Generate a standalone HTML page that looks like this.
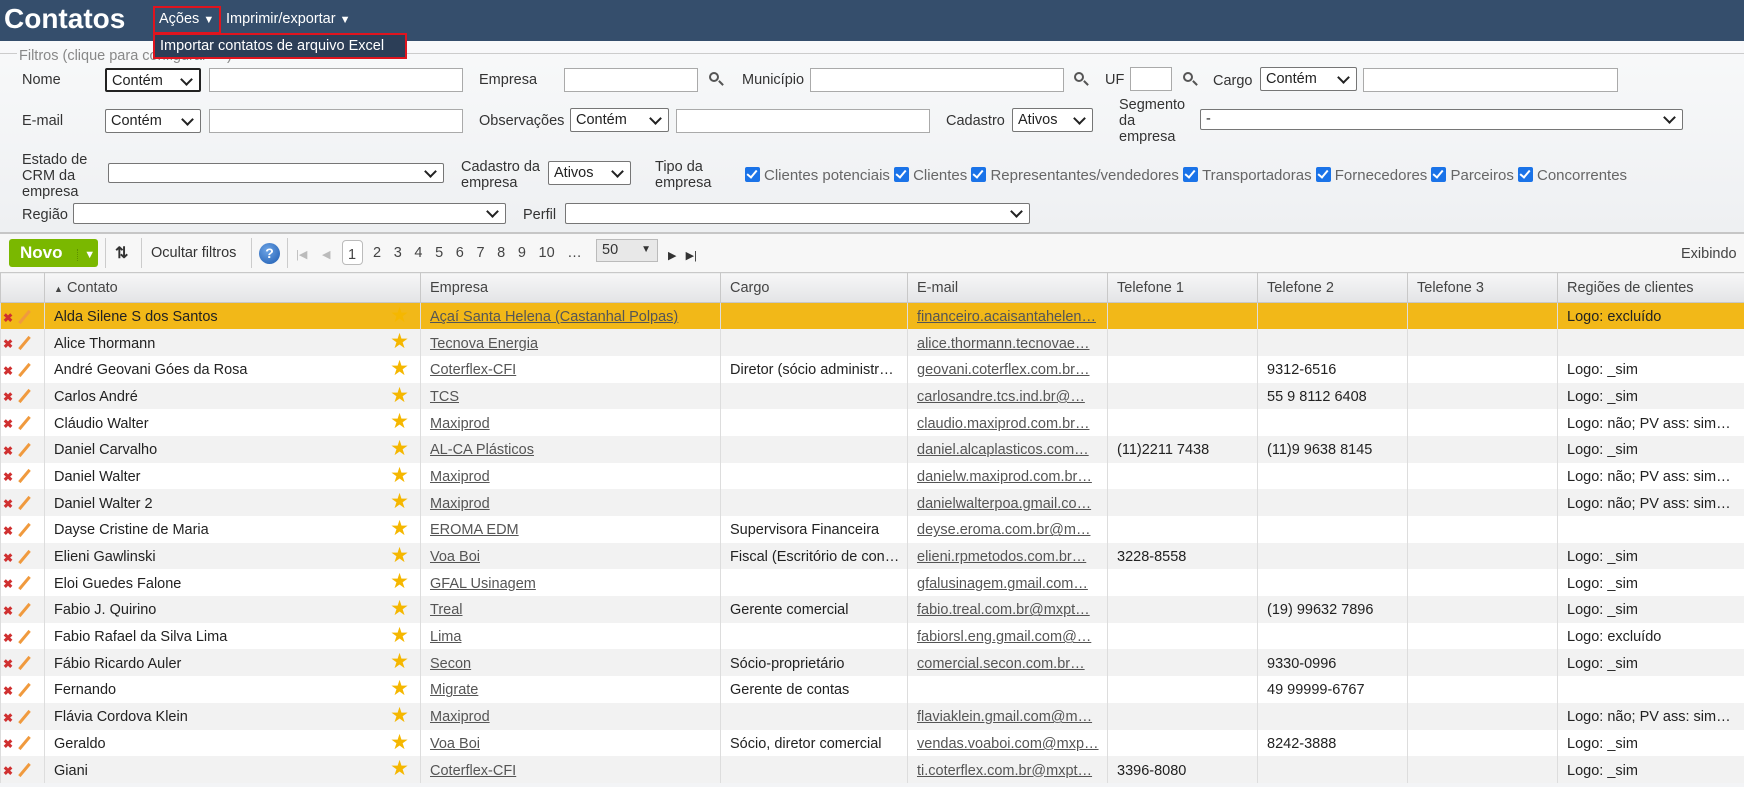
<!DOCTYPE html><html><head><meta charset="utf-8"><style>
*{box-sizing:border-box;margin:0;padding:0}
body{width:1744px;height:787px;overflow:hidden;background:#f3f4f6;font-family:"Liberation Sans",Arial,sans-serif;font-size:14.5px;color:#333;position:relative}
.a{position:absolute;white-space:nowrap}
.hdr{left:0;top:0;width:1744px;height:41px;background:#354e6c}
.inp{position:absolute;background:#fff;border:1px solid #aaa;height:24px}
.sel{position:absolute;background:#fff;border:1px solid #767676;border-radius:2px;height:24px;padding:3px 5px;font-size:14.5px;color:#222;white-space:nowrap}
.sel::after{content:"";position:absolute;right:8px;top:5px;width:7px;height:7px;border-right:2px solid #222;border-bottom:2px solid #222;transform:rotate(45deg)}
.sel.sm::after{top:3px}
.lb{position:absolute;color:#333;font-size:14.5px;line-height:17px;white-space:nowrap}
.cb{display:inline-block;width:15px;height:15px;background:#1a73e8;border-radius:2px;vertical-align:-2px;margin-right:4px;position:relative}
.cb::after{content:"";position:absolute;left:4px;top:1px;width:4px;height:8px;border-right:2px solid #fff;border-bottom:2px solid #fff;transform:rotate(40deg)}
table{position:absolute;left:0;top:272px;border-collapse:collapse;table-layout:fixed;width:1744px}
th{height:30px;background:linear-gradient(#f6f6f7,#e3e4e6);border:1px solid #c8c8c8;text-align:left;font-weight:normal;padding-left:9px;color:#444;font-size:14.5px}
td{height:26.7px;border-left:1px solid #ddd;padding:2px 0 0 9px;vertical-align:middle;white-space:nowrap;overflow:hidden;color:#222;font-size:14.5px;position:relative}
tr.g td{background:#f2f2f2}tr.w td{background:#fff}tr.s td{background:#f2b818}
td u{color:#555}
.x{color:#d03030;font-size:12px;font-weight:bold}
.p{display:inline-block;width:3px;height:16px;background:#f09a3e;transform:rotate(40deg);margin-left:10px;vertical-align:-3px}
.st{position:absolute;right:11px;top:2px;color:#f5b700;font-size:21px;line-height:22px}
.pg{position:absolute;top:245px;color:#444;font-size:14.5px}
.mg{position:absolute;width:10px;height:10px;border:2px solid #555;border-radius:50%}
.mg::after{content:"";position:absolute;left:7px;top:8px;width:6px;height:2px;background:#555;transform:rotate(45deg)}
</style></head><body>
<div class="a hdr"></div>
<div class="a" style="left:4px;top:3px;font-size:28px;font-weight:bold;color:#fff">Contatos</div>
<div class="a" style="left:153px;top:6px;width:68px;height:28px;border:2px solid #e0141e"></div>
<div class="a" style="left:159px;top:11px;color:#fff;font-size:14.5px">Ações <span style="font-size:11px">▼</span></div>
<div class="a" style="left:226px;top:11px;color:#fff;font-size:14.5px">Imprimir/exportar <span style="font-size:11px">▼</span></div>
<div class="a" style="left:0;top:41px;width:1744px;height:191px;background:linear-gradient(#f8f9fa,#eef0f2)"></div>
<div class="a" style="left:0;top:53px;width:1744px;border-top:1px solid #ccc"></div>
<div class="a" style="left:17px;top:48px;color:#888;font-size:14.5px;background:#f7f8f9;padding:0 2px">Filtros (clique para configurar ✎ )</div>
<div class="a" style="left:153px;top:33px;width:254px;height:26px;background:#2c3e57;border:2px solid #e0141e;color:#fff;font-size:14.5px;padding:3px 0 0 5px">Importar contatos de arquivo Excel</div>

<div class="lb" style="left:22px;top:72px">Nome</div>
<div class="sel" style="left:105px;top:68px;width:96px;border:2px solid #222">Contém</div>
<div class="inp" style="left:209px;top:68px;width:254px"></div>
<div class="lb" style="left:479px;top:72px">Empresa</div>
<div class="inp" style="left:564px;top:68px;width:134px"></div>
<div class="mg" style="left:709px;top:72px"></div>
<div class="lb" style="left:742px;top:72px">Município</div>
<div class="inp" style="left:810px;top:68px;width:254px"></div>
<div class="mg" style="left:1074px;top:72px"></div>
<div class="lb" style="left:1105px;top:72px">UF</div>
<div class="inp" style="left:1130px;top:67px;width:42px"></div>
<div class="mg" style="left:1183px;top:72px"></div>
<div class="lb" style="left:1213px;top:73px">Cargo</div>
<div class="sel" style="left:1260px;top:67px;width:97px">Contém</div>
<div class="inp" style="left:1363px;top:68px;width:255px"></div>

<div class="lb" style="left:22px;top:113px">E-mail</div>
<div class="sel" style="left:105px;top:109px;width:96px">Contém</div>
<div class="inp" style="left:209px;top:109px;width:254px"></div>
<div class="lb" style="left:479px;top:113px">Observações</div>
<div class="sel" style="left:570px;top:108px;width:99px">Contém</div>
<div class="inp" style="left:676px;top:109px;width:254px"></div>
<div class="lb" style="left:946px;top:113px">Cadastro</div>
<div class="sel" style="left:1012px;top:108px;width:81px">Ativos</div>
<div class="lb" style="left:1119px;top:97px;line-height:16px">Segmento<br>da<br>empresa</div>
<div class="sel sm" style="left:1200px;top:109px;width:483px;height:21px;padding:1px 5px">-</div>

<div class="lb" style="left:22px;top:152px;line-height:16px">Estado de<br>CRM da<br>empresa</div>
<div class="sel sm" style="left:108px;top:163px;width:336px;height:20px"></div>
<div class="lb" style="left:461px;top:159px;line-height:16px">Cadastro da<br>empresa</div>
<div class="sel" style="left:548px;top:161px;width:83px">Ativos</div>
<div class="lb" style="left:655px;top:159px;line-height:16px">Tipo da<br>empresa</div>
<div class="lb" style="left:745px;top:167px;color:#666;font-size:15px"><span class="cb"></span>Clientes potenciais <span class="cb"></span>Clientes <span class="cb"></span>Representantes/vendedores <span class="cb"></span>Transportadoras <span class="cb"></span>Fornecedores <span class="cb"></span>Parceiros <span class="cb"></span>Concorrentes</div>

<div class="lb" style="left:22px;top:207px">Região</div>
<div class="sel sm" style="left:73px;top:203px;width:433px;height:21px"></div>
<div class="lb" style="left:523px;top:207px">Perfil</div>
<div class="sel sm" style="left:565px;top:203px;width:465px;height:21px"></div>

<div class="a" style="left:0;top:232px;width:1744px;height:40px;background:#f7f7f7;border-top:2px solid #c6c6c6"></div>
<div class="a" style="left:9px;top:239px;width:89px;height:28px;background:#7ab800;border-radius:3px;color:#fff;font-weight:bold;font-size:17px;padding:4px 0 0 11px">Novo <span style="font-size:11px;margin-left:10px;border-left:1px dotted #5e9000;padding-left:6px">▼</span></div>
<div class="a" style="left:105px;top:238px;height:30px;border-left:1px solid #ccc"></div>
<div class="a" style="left:115px;top:243px;font-size:16px;color:#333;font-weight:bold">⇅</div>
<div class="a" style="left:141px;top:238px;height:30px;border-left:1px solid #ccc"></div>
<div class="a" style="left:151px;top:245px;font-size:14.5px;color:#333">Ocultar filtros</div>
<div class="a" style="left:251px;top:238px;height:30px;border-left:1px solid #ccc"></div>
<div class="a" style="left:259px;top:243px;width:21px;height:21px;border-radius:50%;background:radial-gradient(circle at 40% 35%,#6ea5e6,#1c5ab0);color:#fff;font-weight:bold;font-size:14px;text-align:center;line-height:21px">?</div>
<div class="a" style="left:287px;top:238px;height:30px;border-left:1px solid #ccc"></div>
<div class="pg" style="left:296px;color:#bbb;font-size:11px;top:248px">|◀</div>
<div class="pg" style="left:322px;color:#bbb;font-size:11px;top:248px">◀</div>
<div class="a" style="left:342px;top:240px;width:21px;height:25px;border:1px solid #bbb;border-radius:4px;background:#fff"></div>
<div class="pg" style="left:348px;top:247px">1</div>
<div class="pg" style="left:373px;word-spacing:8.6px;top:245px">2 3 4 5 6 7 8 9 10 …</div>
<div class="a" style="left:596px;top:239px;width:62px;height:23px;border:1px solid #bbb;background:#e8e8e8;padding:2px 5px;font-size:14.5px">50<span style="position:absolute;right:6px;top:4px;font-size:10px">▼</span></div>
<div class="pg" style="left:668px;font-size:11px;top:249px;color:#333">▶ &nbsp;&nbsp;▶|</div>
<div class="pg" style="left:1681px;top:246px">Exibindo</div>

<table>
<colgroup><col style="width:44px"><col style="width:376px"><col style="width:300px"><col style="width:187px"><col style="width:200px"><col style="width:150px"><col style="width:150px"><col style="width:150px"><col style="width:187px"></colgroup>
<tr><th></th><th><span style="font-size:9px">▲</span> Contato</th><th>Empresa</th><th>Cargo</th><th>E-mail</th><th>Telefone 1</th><th>Telefone 2</th><th>Telefone 3</th><th>Regiões de clientes</th></tr>
<tr class="s"><td style="padding-left:2px"><span class="x">✖</span><span class="p"></span></td><td>Alda Silene S dos Santos<span class="st">★</span></td><td><u>Açaí Santa Helena (Castanhal Polpas)</u></td><td></td><td><u>financeiro.acaisantahelen…</u></td><td></td><td></td><td></td><td>Logo: excluído</td></tr>
<tr class="g"><td style="padding-left:2px"><span class="x">✖</span><span class="p"></span></td><td>Alice Thormann<span class="st">★</span></td><td><u>Tecnova Energia</u></td><td></td><td><u>alice.thormann.tecnovae…</u></td><td></td><td></td><td></td><td></td></tr>
<tr class="w"><td style="padding-left:2px"><span class="x">✖</span><span class="p"></span></td><td>André Geovani Góes da Rosa<span class="st">★</span></td><td><u>Coterflex-CFI</u></td><td>Diretor (sócio administr…</td><td><u>geovani.coterflex.com.br…</u></td><td></td><td>9312-6516</td><td></td><td>Logo: _sim</td></tr>
<tr class="g"><td style="padding-left:2px"><span class="x">✖</span><span class="p"></span></td><td>Carlos André<span class="st">★</span></td><td><u>TCS</u></td><td></td><td><u>carlosandre.tcs.ind.br@…</u></td><td></td><td>55 9 8112 6408</td><td></td><td>Logo: _sim</td></tr>
<tr class="w"><td style="padding-left:2px"><span class="x">✖</span><span class="p"></span></td><td>Cláudio Walter<span class="st">★</span></td><td><u>Maxiprod</u></td><td></td><td><u>claudio.maxiprod.com.br…</u></td><td></td><td></td><td></td><td>Logo: não; PV ass: sim…</td></tr>
<tr class="g"><td style="padding-left:2px"><span class="x">✖</span><span class="p"></span></td><td>Daniel Carvalho<span class="st">★</span></td><td><u>AL-CA Plásticos</u></td><td></td><td><u>daniel.alcaplasticos.com…</u></td><td>(11)2211 7438</td><td>(11)9 9638 8145</td><td></td><td>Logo: _sim</td></tr>
<tr class="w"><td style="padding-left:2px"><span class="x">✖</span><span class="p"></span></td><td>Daniel Walter<span class="st">★</span></td><td><u>Maxiprod</u></td><td></td><td><u>danielw.maxiprod.com.br…</u></td><td></td><td></td><td></td><td>Logo: não; PV ass: sim…</td></tr>
<tr class="g"><td style="padding-left:2px"><span class="x">✖</span><span class="p"></span></td><td>Daniel Walter 2<span class="st">★</span></td><td><u>Maxiprod</u></td><td></td><td><u>danielwalterpoa.gmail.co…</u></td><td></td><td></td><td></td><td>Logo: não; PV ass: sim…</td></tr>
<tr class="w"><td style="padding-left:2px"><span class="x">✖</span><span class="p"></span></td><td>Dayse Cristine de Maria<span class="st">★</span></td><td><u>EROMA EDM</u></td><td>Supervisora Financeira</td><td><u>deyse.eroma.com.br@m…</u></td><td></td><td></td><td></td><td></td></tr>
<tr class="g"><td style="padding-left:2px"><span class="x">✖</span><span class="p"></span></td><td>Elieni Gawlinski<span class="st">★</span></td><td><u>Voa Boi</u></td><td>Fiscal (Escritório de con…</td><td><u>elieni.rpmetodos.com.br…</u></td><td>3228-8558</td><td></td><td></td><td>Logo: _sim</td></tr>
<tr class="w"><td style="padding-left:2px"><span class="x">✖</span><span class="p"></span></td><td>Eloi Guedes Falone<span class="st">★</span></td><td><u>GFAL Usinagem</u></td><td></td><td><u>gfalusinagem.gmail.com…</u></td><td></td><td></td><td></td><td>Logo: _sim</td></tr>
<tr class="g"><td style="padding-left:2px"><span class="x">✖</span><span class="p"></span></td><td>Fabio J. Quirino<span class="st">★</span></td><td><u>Treal</u></td><td>Gerente comercial</td><td><u>fabio.treal.com.br@mxpt…</u></td><td></td><td>(19) 99632 7896</td><td></td><td>Logo: _sim</td></tr>
<tr class="w"><td style="padding-left:2px"><span class="x">✖</span><span class="p"></span></td><td>Fabio Rafael da Silva Lima<span class="st">★</span></td><td><u>Lima</u></td><td></td><td><u>fabiorsl.eng.gmail.com@…</u></td><td></td><td></td><td></td><td>Logo: excluído</td></tr>
<tr class="g"><td style="padding-left:2px"><span class="x">✖</span><span class="p"></span></td><td>Fábio Ricardo Auler<span class="st">★</span></td><td><u>Secon</u></td><td>Sócio-proprietário</td><td><u>comercial.secon.com.br…</u></td><td></td><td>9330-0996</td><td></td><td>Logo: _sim</td></tr>
<tr class="w"><td style="padding-left:2px"><span class="x">✖</span><span class="p"></span></td><td>Fernando<span class="st">★</span></td><td><u>Migrate</u></td><td>Gerente de contas</td><td></td><td></td><td>49 99999-6767</td><td></td><td></td></tr>
<tr class="g"><td style="padding-left:2px"><span class="x">✖</span><span class="p"></span></td><td>Flávia Cordova Klein<span class="st">★</span></td><td><u>Maxiprod</u></td><td></td><td><u>flaviaklein.gmail.com@m…</u></td><td></td><td></td><td></td><td>Logo: não; PV ass: sim…</td></tr>
<tr class="w"><td style="padding-left:2px"><span class="x">✖</span><span class="p"></span></td><td>Geraldo<span class="st">★</span></td><td><u>Voa Boi</u></td><td>Sócio, diretor comercial</td><td><u>vendas.voaboi.com@mxp…</u></td><td></td><td>8242-3888</td><td></td><td>Logo: _sim</td></tr>
<tr class="g"><td style="padding-left:2px"><span class="x">✖</span><span class="p"></span></td><td>Giani<span class="st">★</span></td><td><u>Coterflex-CFI</u></td><td></td><td><u>ti.coterflex.com.br@mxpt…</u></td><td>3396-8080</td><td></td><td></td><td>Logo: _sim</td></tr>
</table>
</body></html>
